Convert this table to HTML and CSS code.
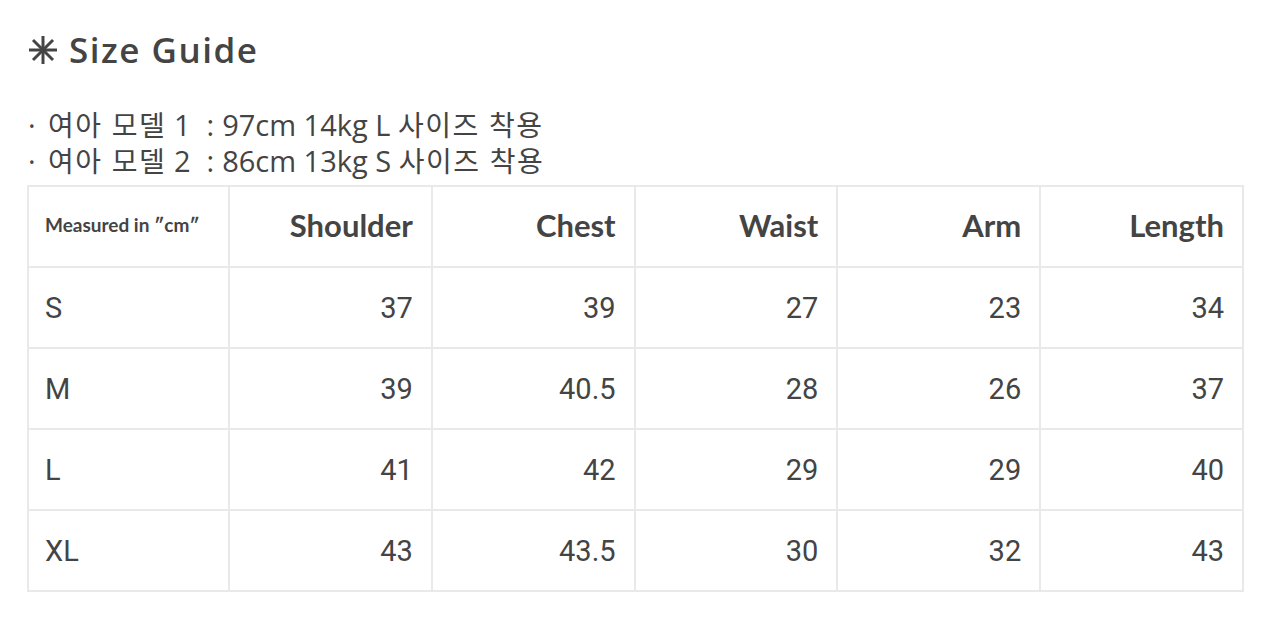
FILE: index.html
```html
<!DOCTYPE html>
<html lang="ko">
<head>
<meta charset="utf-8">
<link rel="stylesheet" href="styles.css">
</head>
<body>
<div class="guide">
  <h1 class="title"><svg class="star" viewBox="0 0 30 30" width="30" height="30"><g stroke="#444" stroke-width="3" stroke-linecap="butt"><line x1="15" y1="1" x2="15" y2="29"/><line x1="1" y1="15" x2="29" y2="15"/><line x1="5" y1="5" x2="25" y2="25"/><line x1="25" y1="5" x2="5" y2="25"/></g></svg><span>Size Guide</span></h1>
  <div class="notes">
    <p><span class="dot">·</span><span class="ko">여아 모델</span> 1<span class="colon">:</span>97cm 14kg L <span class="ko">사이즈 착용</span></p>
    <p><span class="dot">·</span><span class="ko">여아 모델</span> 2<span class="colon">:</span>86cm 13kg S <span class="ko">사이즈 착용</span></p>
  </div>
  <table class="size-table">
    <thead>
      <tr>
        <th class="unit">Measured in ″cm″</th>
        <th>Shoulder</th>
        <th>Chest</th>
        <th>Waist</th>
        <th>Arm</th>
        <th>Length</th>
      </tr>
    </thead>
    <tbody>
      <tr><td class="size">S</td><td>37</td><td>39</td><td>27</td><td>23</td><td>34</td></tr>
      <tr><td class="size">M</td><td>39</td><td>40.5</td><td>28</td><td>26</td><td>37</td></tr>
      <tr><td class="size">L</td><td>41</td><td>42</td><td>29</td><td>29</td><td>40</td></tr>
      <tr><td class="size">XL</td><td>43</td><td>43.5</td><td>30</td><td>32</td><td>43</td></tr>
    </tbody>
  </table>
</div>
</body>
</html>
```

FILE: styles.css
```css
* { box-sizing: border-box; }
html, body { margin: 0; padding: 0; background: #fff; }
body { color: #444; font-family: "Open Sans", "Noto Sans CJK KR", sans-serif; }
.guide { padding: 26px 36px 0 27px; }
.title {
  margin: 0;
  display: flex;
  align-items: center;
  gap: 11px;
  font-size: 35px;
  font-weight: 600;
  letter-spacing: 1.5px;
  line-height: 48px;
  color: #444;
  padding-left: 1px;
}
.star { width: 30px; height: 30px; flex: none; }
.notes {
  margin-top: 33px;
  font-size: 29px;
  line-height: 36px;
  font-family: "Open Sans", "Noto Sans CJK KR", sans-serif;
}
.notes p { margin: 0; white-space: pre; height: 36px; }
.notes .dot { display: inline-block; width: 21px; padding-left: 1px; }
.notes .ko {
  font-family: "Noto Sans CJK KR", sans-serif;
  font-size: 28px;
  font-weight: 400;
  letter-spacing: 1.5px;
  line-height: 1;
}
.notes .colon { margin: 0 8px 0 16px; }
.size-table {
  margin-top: 6px;
  width: 1217px;
  border-collapse: collapse;
  table-layout: fixed;
  border: 2px solid #e9e9e9;
}
.size-table th, .size-table td {
  border: 2px solid #e9e9e9;
  height: 81px;
  padding: 0 18px 0 16px;
  text-align: right;
  vertical-align: middle;
}
.size-table th {
  font-family: Lato, "Noto Sans", sans-serif;
  font-weight: 700;
  font-size: 31px;
  color: #444;
  padding-bottom: 4px;
}
.size-table th.unit {
  text-align: left;
  font-size: 19px;
  width: 201px;
}
.size-table td {
  font-family: Roboto, "Liberation Sans", Arial, sans-serif;
  font-size: 29px;
  color: #444;
}
.size-table td.size { text-align: left; }
```
